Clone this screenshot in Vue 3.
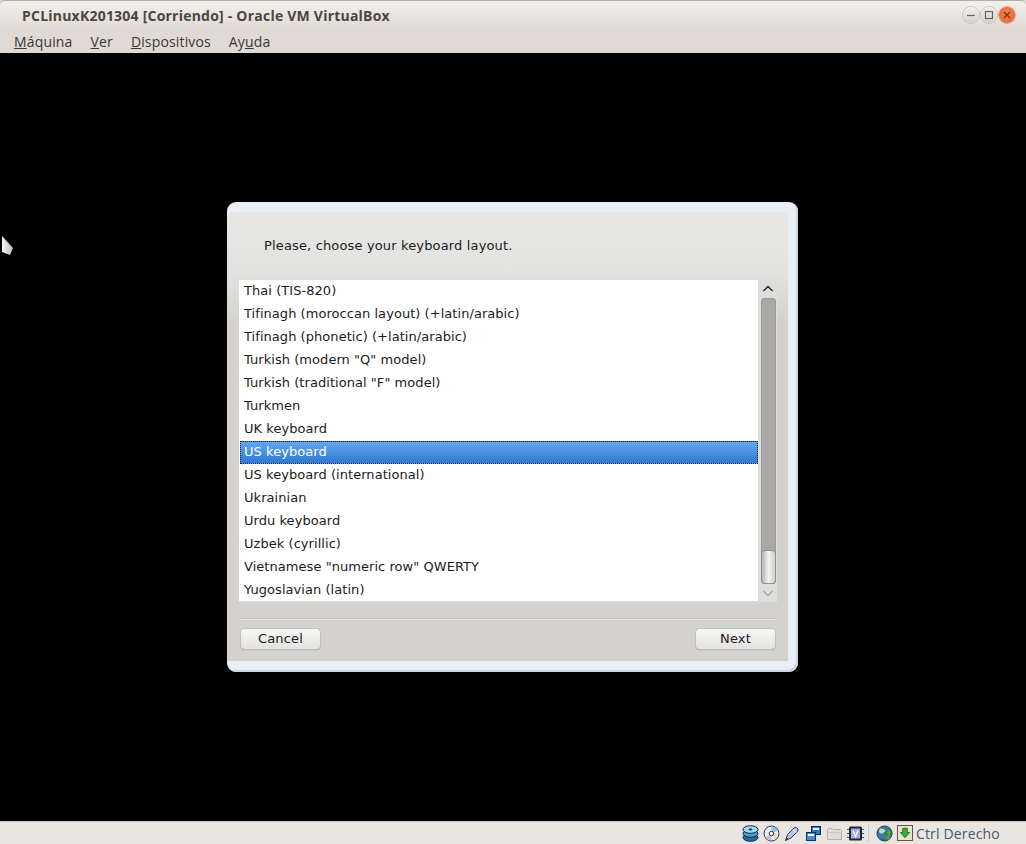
<script setup>
const menus = [
  { u: 'M', rest: 'áquina' },
  { u: 'V', rest: 'er' },
  { u: 'D', rest: 'ispositivos' },
  { pre: 'Ay', u: 'u', rest: 'da' }
]
const rows = [
  'Thai (TIS-820)',
  'Tifinagh (moroccan layout) (+latin/arabic)',
  'Tifinagh (phonetic) (+latin/arabic)',
  'Turkish (modern "Q" model)',
  'Turkish (traditional "F" model)',
  'Turkmen',
  'UK keyboard',
  'US keyboard',
  'US keyboard (international)',
  'Ukrainian',
  'Urdu keyboard',
  'Uzbek (cyrillic)',
  'Vietnamese "numeric row" QWERTY',
  'Yugoslavian (latin)'
]
</script>

<template>
  <div class="win">
    <header class="titlebar">
      <span class="title">PCLinuxK201304 [Corriendo] - Oracle VM VirtualBox</span>
      <div class="controls">
        <span class="ctl"><svg width="16" height="16" viewBox="0 0 16 16"><path d="M4 8.500h8" stroke="#6a655f" stroke-width="1.200"/></svg></span>
        <span class="ctl"><svg width="16" height="16" viewBox="0 0 16 16"><rect x="4.500" y="4.500" width="7" height="7" fill="none" stroke="#6a655f" stroke-width="1.200"/></svg></span>
        <span class="ctl close"><svg width="16" height="16" viewBox="0 0 16 16"><path d="M5 5l6 6M11 5l-6 6" stroke="#7a3216" stroke-width="1.300"/></svg></span>
      </div>
    </header>
    <nav class="menubar">
      <span v-for="m in menus" :key="m.rest" class="menu">{{ m.pre }}<u>{{ m.u }}</u>{{ m.rest }}</span>
    </nav>
    <main class="screen">
      <svg class="pointer" width="14" height="22" viewBox="0 0 14 22">
        <defs><linearGradient id="pg" x1="0" x2="1"><stop offset="0" stop-color="#f4f4f4"/><stop offset="1" stop-color="#bdbdbd"/></linearGradient></defs>
        <path d="M2 1v16l8 3 3-7z" fill="url(#pg)"/>
      </svg>
      <section class="dialog">
        <div class="panel">
          <p class="prompt">Please, choose your keyboard layout.</p>
          <div class="listbox">
            <ul class="list">
              <li v-for="r in rows" :key="r" :class="['row', { sel: r === 'US keyboard' }]">{{ r }}</li>
            </ul>
            <div class="scroll">
              <svg class="arrow" width="18" height="18" viewBox="0 0 18 18"><path d="M4.500 11L9 6.500 13.500 11" fill="none" stroke="#222" stroke-width="1.400"/></svg>
              <div class="track"><div class="thumb"></div></div>
              <svg class="arrow" width="18" height="18" viewBox="0 0 18 18"><path d="M4.500 7L9 11.500 13.500 7" fill="none" stroke="#a5a5a3" stroke-width="1.400"/></svg>
            </div>
          </div>
          <div class="sep"></div>
          <div class="buttons">
            <button class="btn">Cancel</button>
            <button class="btn">Next</button>
          </div>
        </div>
      </section>
    </main>
    <footer class="status">
      <svg class="ic" width="17" height="17" viewBox="0 0 17 17">
        <ellipse cx="8.500" cy="12.500" rx="7.500" ry="3.800" fill="#1f6d9f" stroke="#0e2a3f"/>
        <ellipse cx="8.500" cy="8.500" rx="7.500" ry="3.800" fill="#4a9ccc" stroke="#0e2a3f"/>
        <ellipse cx="8.500" cy="4.500" rx="7.500" ry="3.800" fill="#a5d5ef" stroke="#0e2a3f"/>
        <ellipse cx="8.500" cy="4.500" rx="2" ry="1" fill="#17405c"/>
      </svg>
      <svg class="ic" width="17" height="17" viewBox="0 0 17 17">
        <circle cx="8.500" cy="8.500" r="7.500" fill="#e6ecf4" stroke="#2a3346"/>
        <path d="M8.500 1.500a7 7 0 0 1 6.300 4L8.500 8.500z" fill="#8fc0ee"/>
        <path d="M2.500 12.500a7 7 0 0 0 6 3V8.500z" fill="#d7b0e8"/>
        <path d="M15 10.500a7 7 0 0 1-3 4L8.500 8.500z" fill="#f0e2a0"/>
        <circle cx="8.500" cy="8.500" r="2.200" fill="#fff" stroke="#2a3346"/>
      </svg>
      <svg class="ic" width="17" height="17" viewBox="0 0 17 17">
        <path d="M1.500 15.500l2-6 6.500-6.500c2-2 5.500 1.500 3.500 3.500L7 13z" fill="#b4c7e6" stroke="#24365a"/>
        <path d="M9 4.500l3 3" stroke="#fff"/>
        <path d="M1.500 15.500l2.500-2.500" stroke="#24365a"/>
      </svg>
      <svg class="ic" width="17" height="17" viewBox="0 0 17 17">
        <rect x="6.500" y="1.500" width="9" height="8" fill="#2a74cc" stroke="#0f2f5e"/>
        <rect x="1.500" y="7.500" width="9" height="8" fill="#3f8be0" stroke="#0f2f5e"/>
        <rect x="3" y="9" width="6" height="2" fill="#fff"/>
        <rect x="8" y="3" width="6" height="2" fill="#fff"/>
      </svg>
      <svg class="ic" width="17" height="17" viewBox="0 0 17 17">
        <path d="M1.500 14.500V4.500l1-1h4l1 1h7l1 1v9z" fill="#dfddd9" stroke="#b5b1aa"/>
        <path d="M2.500 7.500h12" stroke="#c9c6c0"/>
      </svg>
      <svg class="ic" width="17" height="17" viewBox="0 0 17 17">
        <rect x="2" y="1.500" width="13" height="14" rx="1.500" fill="#1d2636"/>
        <path d="M0 4.500h2M0 8.500h2M0 12.500h2M15 4.500h2M15 8.500h2M15 12.500h2" stroke="#555"/>
        <rect x="4" y="3.500" width="9" height="10" fill="#a5acdc"/>
        <path d="M6 5.500l2.500 6 2.500-6" fill="none" stroke="#fff" stroke-width="1.300"/>
      </svg>
      <span class="divider"></span>
      <svg class="ic" width="17" height="17" viewBox="0 0 18 18">
        <circle cx="9" cy="9" r="8" fill="#3e78a6" stroke="#1d3a52"/>
        <path d="M4 3.500c3 1 5 0 6 3l-4 3-3-2zM10 13l4-3 0 5z" fill="#c4d7ae"/>
        <path d="M5 15c5 1 7-2 7-6h-2l3.500-5L17 9h-2c0 6-5 8-10 6z" fill="#4fb03f" stroke="#1f5c19" stroke-width=".6"/>
      </svg>
      <svg class="ic" width="16" height="16" viewBox="0 0 17 17">
        <rect x=".5" y=".5" width="16" height="16" fill="#e9e5cc" stroke="#55503a"/>
        <path d="M6 3.500h5v4.500h2.500L8.500 13.500 3.500 8H6z" fill="#40a83a" stroke="#1b5a19" stroke-width=".8"/>
      </svg>
      <span class="host">Ctrl Derecho</span>
    </footer>
  </div>
</template>

<style>
html, body { margin: 0; background: #000; }
</style>

<style scoped>
.win {
  width: 1026px;
  height: 844px;
  display: flex;
  flex-direction: column;
  overflow: hidden;
  background: #dfdad5;
}
.titlebar {
  height: 29px;
  box-sizing: border-box;
  display: flex;
  align-items: center;
  justify-content: space-between;
  padding: 0 11px 0 22px;
  border-top: 1px solid #b5aca2;
  border-radius: 5px 5px 0 0;
  background: linear-gradient(#f3f1ed, #dfdad5);
}
.title {
  font: bold 14px "Open Sans", "Liberation Sans", sans-serif;
  letter-spacing: 0.22px;
  color: #4c4641;
}
.controls { display: flex; gap: 2px; }
.ctl {
  width: 16px;
  height: 16px;
  border-radius: 50%;
  background: linear-gradient(#f2efeb, #d6d1cb);
  box-shadow: 0 0 0 1px #c9c4be;
  display: flex;
  align-items: center;
  justify-content: center;
}
.close {
  background: radial-gradient(circle at 50% 40%, #f58455, #e85f2a);
  box-shadow: 0 0 0 1px #d9a98f;
}
.menubar {
  height: 24px;
  display: flex;
  align-items: center;
  gap: 18px;
  padding: 0 0 0 14px;
  font: 14px "Open Sans", "Liberation Sans", sans-serif;
  letter-spacing: 0.15px;
  color: #3c3833;
}
.screen {
  flex: 1;
  position: relative;
  background: #000;
  display: flex;
  align-items: center;
  justify-content: center;
  padding-right: 1px;
}
.pointer { position: absolute; left: 0; top: 182px; }
.dialog {
  width: 571px;
  height: 470px;
  box-sizing: border-box;
  border-radius: 9px;
  padding: 10px 10px 11px 0;
  background: #e8eff6;
  box-shadow: inset -2px -2px 0 #c8d6e6;
}
.panel {
  height: 100%;
  display: flex;
  flex-direction: column;
  padding: 0 11px 0 12px;
  border-radius: 8px 0 0 0;
  background: linear-gradient(#e7e7e6 0, #e2e2e0 60px, #d3d2cf 110px);
  font: 13px "DejaVu Sans", sans-serif;
  color: #1c1c1c;
}
.prompt {
  height: 68px;
  margin: 0;
  padding: 25px 0 0 25px;
  box-sizing: border-box;
  line-height: 18px;
  letter-spacing: 0.15px;
}
.listbox {
  display: flex;
  height: 322px;
  width: 538px;
}
.list {
  flex: 1;
  margin: 0;
  padding: 0;
  list-style: none;
  background: #fff;
  border: 1px solid #dcdcda;
  border-width: 0 1px 1px 0;
  letter-spacing: 0.05px;
}
.row {
  height: 23px;
  line-height: 22px;
  padding-left: 4px;
  margin-left: 1px;
  box-sizing: border-box;
  white-space: nowrap;
}
.sel {
  color: #fff;
  padding-left: 3px;
  line-height: 19px;
  border: 1px dotted #1a2a44;
  background: linear-gradient(#62a8ee, #3178cf);
}
.scroll {
  width: 18px;
  display: flex;
  flex-direction: column;
  background: #dededc;
}
.arrow { flex: none; }
.track {
  flex: 1;
  width: 15px;
  margin-left: 2px;
  display: flex;
  align-items: flex-end;
  background: #a9a8a4;
  border-radius: 4px;
  box-shadow: inset 0 0 0 1px #9b9a96;
}
.thumb {
  width: 100%;
  height: 34px;
  box-sizing: border-box;
  border: 1px solid #8f8e8a;
  border-radius: 4px;
  background: linear-gradient(90deg, #b5b5b2, #f3f3f2 50%, #cfcfcc);
}
.sep {
  height: 1px;
  margin-top: 16px;
  background: #c4c3bf;
  box-shadow: 0 1px 0 #e6e5e2;
}
.buttons {
  display: flex;
  justify-content: space-between;
  margin-top: 10px;
  padding: 0 2px 0 2px;
}
.btn {
  width: 79px;
  height: 20px;
  padding: 0 0 2px;
  border: 0;
  border-radius: 4px;
  font: 13px "DejaVu Sans", sans-serif;
  letter-spacing: 0.15px;
  color: #1c1c1c;
  background: linear-gradient(#f7f7f6, #e2e2e0);
  box-shadow: 0 0 0 1px #c0bfbb, 0 1px 1px #8a8985;
}
.status {
  height: 23px;
  box-sizing: border-box;
  display: flex;
  align-items: center;
  gap: 4px;
  padding: 0 26px 0 742px;
  border-top: 1px solid #c6c1ba;
  background: #e9e6e2;
}
.ic { flex: none; }
.divider { width: 1px; height: 18px; margin: 0 3px 0 0; background: #cfcbc5; }
.host {
  font: 14px "Open Sans", "Liberation Sans", sans-serif;
  letter-spacing: 0.15px;
  margin-left: -1px;
  color: #46586e;
  white-space: nowrap;
}
</style>
